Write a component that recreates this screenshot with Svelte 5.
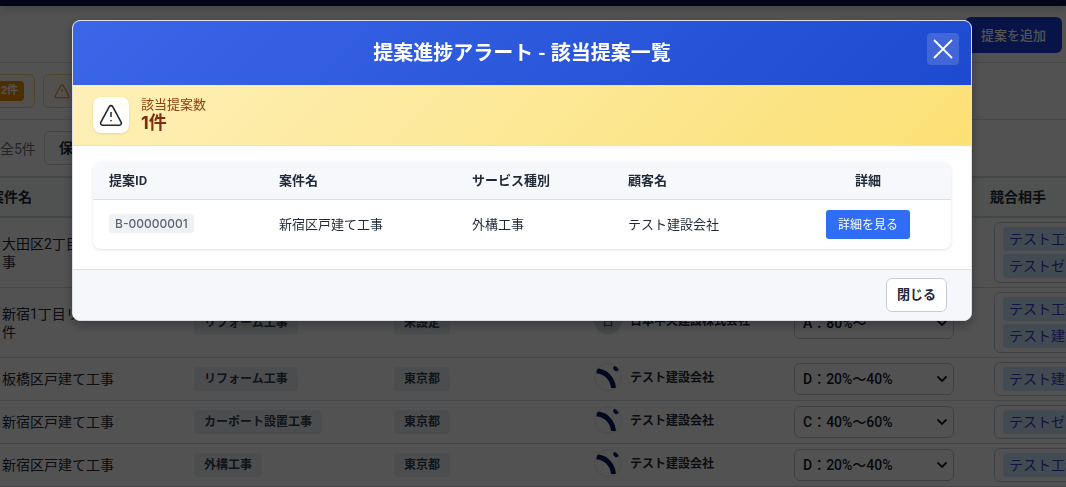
<script lang="ts">
	interface Proposal {
		name: string;
		service: string;
		area: string;
		customer: string;
		initial?: string;
		rank: string;
		rivals: string[];
	}

	const ranks = ['A：80%〜', 'B：60%〜80%', 'C：40%〜60%', 'D：20%〜40%'];

	const proposals: Proposal[] = [
		{
			name: '大田区2丁目リフォーム工事',
			service: 'リフォーム工事',
			area: '東京都',
			customer: 'テスト建設会社',
			rank: 'B：60%〜80%',
			rivals: ['テスト工務店', 'テストゼネコン']
		},
		{
			name: '新宿1丁目リフォームの案件',
			service: 'リフォーム工事',
			area: '未設定',
			customer: '日本中央建設株式会社',
			initial: '日',
			rank: 'A：80%〜',
			rivals: ['テスト工務店', 'テスト建設']
		},
		{
			name: '板橋区戸建て工事',
			service: 'リフォーム工事',
			area: '東京都',
			customer: 'テスト建設会社',
			rank: 'D：20%〜40%',
			rivals: ['テスト建設']
		},
		{
			name: '新宿区戸建て工事',
			service: 'カーポート設置工事',
			area: '東京都',
			customer: 'テスト建設会社',
			rank: 'C：40%〜60%',
			rivals: ['テストゼネコン']
		},
		{
			name: '新宿区戸建て工事',
			service: '外構工事',
			area: '東京都',
			customer: 'テスト建設会社',
			rank: 'D：20%〜40%',
			rivals: ['テスト工務店']
		}
	];

	const matches = [
		{
			id: 'B-00000001',
			name: '新宿区戸建て工事',
			service: '外構工事',
			customer: 'テスト建設会社'
		}
	];

	let open = $state(true);
</script>

{#snippet warning(size: number)}
	<svg width={size} height={size} viewBox="0 0 24 24" fill="none" stroke="currentColor" aria-hidden="true">
		<path
			d="M10.3 3.6 1.8 19.3a2 2 0 0 0 1.7 2.9h17a2 2 0 0 0 1.7-2.9L13.7 3.6a2 2 0 0 0-3.4 0z"
			stroke-width="1.6"
			stroke-linejoin="round"
		/>
		<path d="M12 9v5M12 17v1.2" stroke-width="1.5" />
	</svg>
{/snippet}

<div class="page">
	<div class="navbar"></div>
	<header class="toolbar">
		<button class="add">提案を追加</button>
	</header>
	<div class="alerts">
		<button class="alert"><span class="count">2件</span></button>
		<button class="alert" aria-label="提案進捗アラート">{@render warning(16)}</button>
	</div>
	<div class="filters">
		<span class="total">全5件</span>
		<button class="save">保存</button>
	</div>

	<div class="list">
		<table class="proposals">
			<thead>
				<tr>
					<th scope="col">案件名</th>
					<th scope="col">サービス種別</th>
					<th scope="col">都道府県</th>
					<th scope="col">顧客名</th>
					<th scope="col">受注確度</th>
					<th scope="col">競合相手</th>
				</tr>
			</thead>
			<tbody>
				{#each proposals as proposal, row (row)}
					<tr>
						<td class="name">{proposal.name}</td>
						<td><span class="chip">{proposal.service}</span></td>
						<td><span class="chip">{proposal.area}</span></td>
						<td>
							<div class="customer">
								{#if proposal.initial}
									<span class="avatar initial">{proposal.initial}</span>
								{:else}
									<span class="avatar">
										<svg width="26" height="26" viewBox="0 0 26 26" aria-hidden="true">
											<path d="M1.500 4.500C11 4 20.500 13 21 24h-5C15.500 16 9 9.500 1.500 9.500z" fill="#06185c" />
											<ellipse cx="21" cy="4.500" rx="2.300" ry="3" transform="rotate(-45 21 4.500)" fill="#06185c" />
										</svg>
									</span>
								{/if}
								<span class="customer-name">{proposal.customer}</span>
							</div>
						</td>
						<td>
							<div class="rank">
								<select aria-label="受注確度" value={proposal.rank}>
									{#each ranks as rank (rank)}
										<option>{rank}</option>
									{/each}
								</select>
								<svg width="12" height="12" viewBox="0 0 12 12" aria-hidden="true">
									<path d="m1.500 3.500 4.500 4.500 4.500-4.500" fill="none" stroke="#111827" stroke-width="1.8" />
								</svg>
							</div>
						</td>
						<td>
							<div class="rivals">
								{#each proposal.rivals as rival (rival)}
									<span>{rival}</span>
								{/each}
							</div>
						</td>
					</tr>
				{/each}
			</tbody>
		</table>
	</div>
</div>

{#if open}
	<div class="overlay">
		<div class="modal" role="dialog" aria-modal="true" aria-labelledby="modal-title">
			<div class="modal-header">
				<h2 id="modal-title">提案進捗アラート - 該当提案一覧</h2>
				<button class="close" aria-label="閉じる" onclick={() => (open = false)}>
					<svg width="20" height="20" viewBox="0 0 20 20" aria-hidden="true">
						<path d="m1 1 18 18M19 1 1 19" stroke="currentColor" stroke-width="1.8" />
					</svg>
				</button>
			</div>

			<div class="summary">
				<span class="summary-icon">{@render warning(24)}</span>
				<div>
					<div class="summary-label">該当提案数</div>
					<div class="summary-count">{matches.length}件</div>
				</div>
			</div>

			<div class="modal-body">
				<table class="matches">
					<thead>
						<tr>
							<th scope="col" class="col-id">提案ID</th>
							<th scope="col" class="col-name">案件名</th>
							<th scope="col" class="col-service">サービス種別</th>
							<th scope="col" class="col-customer">顧客名</th>
							<th scope="col" class="action">詳細</th>
						</tr>
					</thead>
					<tbody>
						{#each matches as match (match.id)}
							<tr>
								<td><span class="id">{match.id}</span></td>
								<td>{match.name}</td>
								<td>{match.service}</td>
								<td>{match.customer}</td>
								<td class="action"><button class="detail">詳細を見る</button></td>
							</tr>
						{/each}
					</tbody>
				</table>
			</div>

			<div class="modal-footer">
				<button class="dismiss" onclick={() => (open = false)}>閉じる</button>
			</div>
		</div>
	</div>
{/if}

<style>
	:global(body) {
		overflow: hidden;
		background: #fff;
		color: #1f2937;
		font-family: Roboto, 'Noto Sans CJK JP', sans-serif;
		font-size: 14px;
	}

	* {
		box-sizing: border-box;
	}

	button,
	select {
		font-family: inherit;
		cursor: pointer;
	}

	svg {
		display: block;
		flex: none;
	}

	.page {
		height: 100vh;
		overflow: hidden;
	}

	.navbar {
		height: 6px;
		background: #0b1550;
		box-shadow: 0 2px 8px rgba(0, 0, 0, 0.25);
	}

	.toolbar {
		display: flex;
		justify-content: flex-end;
		align-items: center;
		height: 57px;
		padding: 2px 4px 0;
		border-bottom: 1px solid #dcdddf;
	}

	.add {
		height: 36px;
		padding: 0 16px 2px;
		border: 0;
		border-radius: 6px;
		background: #1a3fe0;
		color: #fff;
		font-size: 13px;
		font-weight: 500;
	}

	.alerts,
	.filters {
		display: flex;
		align-items: center;
		height: 57px;
		gap: 8px;
		border-bottom: 1px solid #dcdddf;
	}

	.alert {
		display: flex;
		align-items: center;
		height: 34px;
		padding: 0 10px;
		border: 1px solid #fcd38a;
		border-radius: 6px;
		background: #fffaf0;
		color: #e8860c;
	}

	.alert:first-child {
		width: 35px;
		justify-content: flex-end;
		border-left: 0;
		border-radius: 0 6px 6px 0;
	}

	.count {
		padding: 0 6px;
		border-radius: 4px;
		background: #ef8f06;
		color: #fff;
		font-size: 11px;
		font-weight: 700;
		line-height: 20px;
		white-space: nowrap;
	}

	.filters {
		height: 56px;
		border-bottom: 0;
	}

	.total {
		color: #6b7280;
	}

	.save {
		height: 34px;
		padding: 0 14px 2px;
		border: 1px solid #d1d5db;
		border-radius: 6px;
		background: #fff;
		color: #1f2937;
		font-size: 14px;
		font-weight: 700;
	}

	.list {
		margin-left: -26px;
	}

	.proposals {
		width: 1200px;
		table-layout: fixed;
		border-collapse: separate;
		border-spacing: 0;
	}

	.proposals th {
		height: 42px;
		padding: 0 16px 2px;
		border-top: 2px solid #d6d8dc;
		border-bottom: 2px solid #d6d8dc;
		border-right: 1px solid #eeeff2;
		background: #f9fafb;
		text-align: left;
		font-weight: 600;
	}

	.proposals td {
		height: 43px;
		padding: 4px 20px;
		border-bottom: 1px solid #d6d8dc;
	}

	.proposals td.name {
		padding: 0 8px 0 28px;
		line-height: 18px;
	}

	.chip {
		display: inline-block;
		padding: 0 10px;
		border-radius: 4px;
		background: #eceef1;
		color: #374151;
		font-size: 12px;
		font-weight: 600;
		line-height: 24px;
		vertical-align: middle;
	}

	.customer {
		display: flex;
		align-items: center;
		gap: 8px;
		padding-bottom: 4px;
		font-size: 12px;
		font-weight: 600;
		white-space: nowrap;
	}

	.customer-name {
		padding-bottom: 2px;
	}

	.avatar {
		display: flex;
		justify-content: center;
		align-items: center;
		flex: none;
		width: 28px;
		height: 28px;
		overflow: hidden;
		border: 1px solid #e5e7eb;
		border-radius: 50%;
	}

	.initial {
		background: #d9dbe0;
		color: #4b5563;
		font-weight: 500;
	}

	.rank {
		display: grid;
		align-items: center;
	}

	.rank > * {
		grid-area: 1 / 1;
	}

	.rank svg {
		justify-self: end;
		margin-right: 6px;
		pointer-events: none;
	}

	select {
		appearance: none;
		width: 100%;
		height: 32px;
		padding: 0 8px;
		border: 1px solid #c4c8cf;
		border-radius: 6px;
		background: #fff;
		color: #111827;
		font-size: 14px;
		font-weight: 500;
	}

	.rivals {
		display: flex;
		flex-direction: column;
		gap: 3px;
		padding: 4px 8px;
		border: 1px solid #c4c8cf;
		border-radius: 6px;
	}

	.rivals span {
		padding: 0 6px;
		border-radius: 4px;
		background: #cce6fd;
		color: #3f3fc8;
		line-height: 24px;
		white-space: nowrap;
	}

	.overlay {
		position: fixed;
		inset: 0;
		padding: 20px 94px 20px 72px;
		background: rgba(0, 0, 0, 0.68);
	}

	.modal {
		overflow: hidden;
		border: 1px solid #dcdee6;
		border-radius: 8px;
		background: #fff;
		box-shadow: 0 4px 12px rgba(0, 0, 0, 0.3);
	}

	.modal-header {
		display: grid;
		grid-template-columns: 1fr auto 1fr;
		align-items: center;
		height: 64px;
		padding: 0 12px;
		background: linear-gradient(135deg, #3b66e8, #1d4ad0);
		color: #fff;
	}

	h2 {
		grid-column: 2;
		margin: 0;
		font-size: 20px;
		font-weight: 600;
		line-height: 28px;
	}

	.close {
		display: grid;
		place-items: center;
		justify-self: end;
		width: 32px;
		height: 32px;
		margin-bottom: 8px;
		padding: 0;
		border: 0;
		border-radius: 4px;
		background: rgba(255, 255, 255, 0.15);
		color: #fff;
	}

	.summary {
		display: flex;
		align-items: center;
		gap: 12px;
		padding: 12px 20px;
		border-bottom: 1px solid #dfe1e6;
		background: linear-gradient(135deg, #fef0b8, #fbe074);
	}

	.summary-icon {
		display: grid;
		place-items: center;
		width: 36px;
		height: 36px;
		border-radius: 8px;
		background: #fffefa;
		color: #1f2937;
		box-shadow: 0 1px 3px rgba(0, 0, 0, 0.1);
	}

	.summary-label {
		color: #92400e;
		font-size: 13px;
		line-height: 16px;
	}

	.summary-count {
		color: #7c2d12;
		font-family: Inter, 'Noto Sans CJK JP', sans-serif;
		font-size: 18px;
		font-weight: 700;
		line-height: 20px;
	}

	.modal-body {
		padding: 16px 20px 20px;
	}

	.matches {
		width: 100%;
		table-layout: fixed;
		overflow: hidden;
		border-spacing: 0;
		border-radius: 8px;
		box-shadow: 0 1px 3px rgba(0, 0, 0, 0.12);
		font-size: 13px;
	}

	.matches th {
		height: 38px;
		padding: 0 16px 2px;
		border-bottom: 1px solid #dcdee6;
		background: #f6f8fc;
		text-align: left;
		font-weight: 600;
	}

	.matches td {
		height: 49px;
		padding: 0 16px 2px;
	}

	.matches .action {
		text-align: center;
	}

	.matches td.action {
		padding-bottom: 0;
	}

	.col-id {
		width: 170px;
	}

	.col-name {
		width: 193px;
	}

	.col-service {
		width: 156px;
	}

	.col-customer {
		width: 173px;
	}

	.id {
		display: inline-block;
		padding: 0 6px;
		border-radius: 3px;
		background: #f0f1f3;
		color: #5b6475;
		font-family: Inter, sans-serif;
		font-size: 12px;
		font-weight: 500;
		line-height: 19px;
		vertical-align: middle;
	}

	.detail {
		height: 29px;
		padding: 0 12px 2px;
		border: 0;
		border-radius: 3px;
		background: #2f6df6;
		color: #fff;
		font-size: 12px;
	}

	.modal-footer {
		display: flex;
		justify-content: flex-end;
		padding: 8px 24px;
		border-top: 1px solid #dcdee6;
		background: #f6f7fa;
	}

	.dismiss {
		height: 34px;
		padding: 0 10px 4px;
		border: 1px solid #c8ccd6;
		border-radius: 6px;
		background: #fff;
		color: #1f2937;
		font-size: 13px;
		font-weight: 600;
	}
</style>
